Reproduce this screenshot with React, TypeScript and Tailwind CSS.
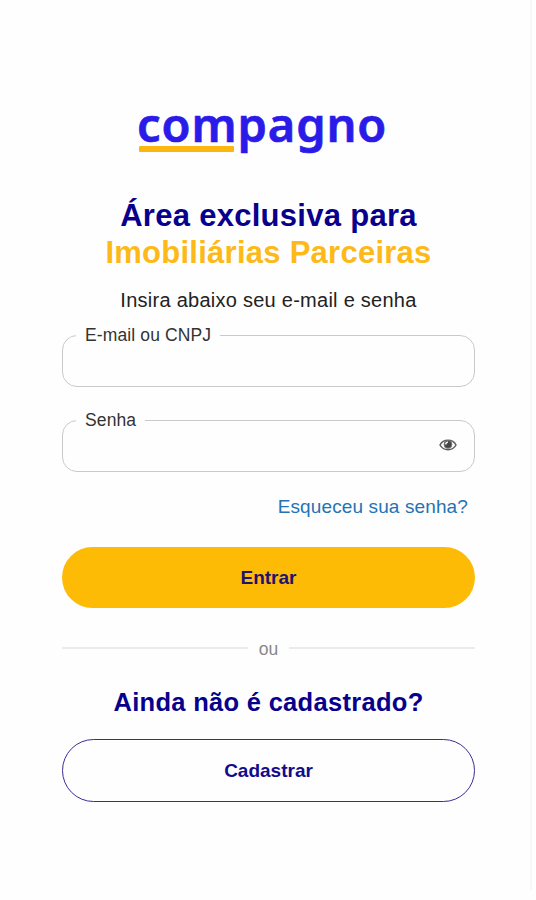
import type { ReactNode } from "react";

function EyeIcon() {
  return (
    <svg width="18" height="14" viewBox="0 0 18 14" fill="none" stroke="#606060" strokeWidth="1.5">
      <path d="M1 7C4.2 0.8 13.8 0.8 17 7C13.8 13.2 4.2 13.2 1 7Z" />
      <circle cx="9" cy="6.4" r="3.9" fill="#444" stroke="#777" strokeWidth="1" />
      <path d="M6.8 6.4C6.8 5 7.8 4.3 9 4.3" stroke="#eee" strokeWidth="1.5" />
    </svg>
  );
}

function Field({ label, type, children }: { label: string; type: string; children?: ReactNode }) {
  return (
    <fieldset className="h-[62px] rounded-[15px] border border-[#c9c9c9] pl-[13px] pr-[17px]">
      <legend className="h-5 whitespace-nowrap pl-[9px] pr-[9px] text-[17.5px] leading-5 tracking-[0.12px] text-[#333]">
        {label}
      </legend>
      <div className="flex h-[30px] items-center">
        <input type={type} aria-label={label} className="h-full min-w-0 flex-1 bg-transparent outline-none" />
        {children}
      </div>
    </fieldset>
  );
}

export default function App() {
  return (
    <div className="flex h-[900px] w-[536px] items-start overflow-hidden bg-[#fefefe] font-['Liberation_Sans',Arial,sans-serif]">
      <main className="ml-[62px] flex w-[413px] shrink-0 flex-col">
        <div className="ml-[75px] mt-[101px] flex h-[59px] flex-col">
          <span className="h-[45px] whitespace-nowrap font-['Noto_Sans',sans-serif] text-[47px] font-semibold leading-[46px] tracking-[0.9px] text-[#2a1be8] [-webkit-text-stroke:0.7px_#2a1be8]">
            compagno
          </span>
          <span className="ml-[2px] h-[6px] w-[95px] rounded-[1px] bg-[#fbb70f]" />
        </div>

        <h1 className="mt-[37px] text-center text-[31px] font-bold leading-[37px] text-[#08008c]">
          <span className="block whitespace-nowrap tracking-[0.28px]">Área exclusiva para</span>
          <span className="block whitespace-nowrap tracking-[0.26px] text-[#fdb917]">Imobiliárias Parceiras</span>
        </h1>
        <p className="mt-[17px] whitespace-nowrap text-center text-[20px] leading-6 tracking-[0.26px] text-[#222]">
          Insira abaixo seu e-mail e senha
        </p>

        <form className="mt-[13px] flex flex-col" onSubmit={(e) => e.preventDefault()}>
          <div className="flex flex-col gap-[23px]">
            <Field label="E-mail ou CNPJ" type="text" />
            <Field label="Senha" type="password">
              <button type="button" aria-label="Senha" className="shrink-0">
                <EyeIcon />
              </button>
            </Field>
          </div>
          <a href="#" className="mr-[7px] mt-[23px] self-end whitespace-nowrap text-[19px] leading-6 tracking-[0.12px] text-[#2473b3]">
            Esqueceu sua senha?
          </a>
          <button className="mt-[28px] h-[61px] rounded-full bg-[#fdbb05] pt-[2px] text-[19px] font-bold text-[#21126f]">
            Entrar
          </button>
        </form>

        <div className="mt-[30px] flex h-5 items-center text-[17.5px] leading-5 text-[#888]">
          <span className="h-[2px] w-[186px] bg-[#ebebeb]" />
          <span className="flex-1 pt-px text-center">ou</span>
          <span className="h-[2px] w-[186px] bg-[#ebebeb]" />
        </div>

        <h2 className="mt-[29px] whitespace-nowrap text-center text-[25.5px] font-bold leading-[30px] tracking-[0.3px] text-[#08008c]">
          Ainda não é cadastrado?
        </h2>
        <button className="mt-[22px] h-[63px] rounded-full border border-[#382c98] pt-[2px] text-[19px] font-bold text-[#130b8c]">
          Cadastrar
        </button>
      </main>
      <div className="ml-auto mr-[4px] h-[890px] w-[2px] bg-[#f7f7f7]" />
    </div>
  );
}
